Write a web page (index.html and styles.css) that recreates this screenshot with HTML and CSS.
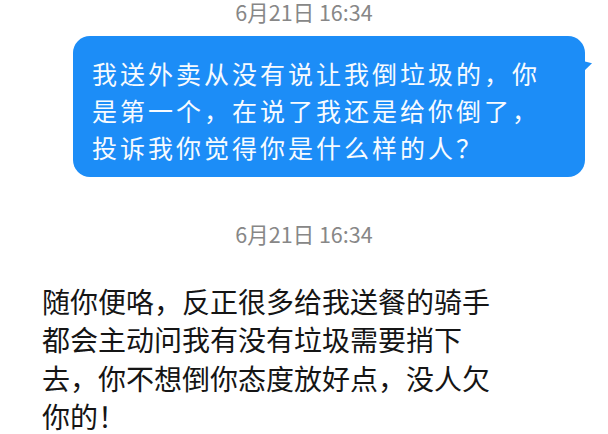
FILE: index.html
```html
<!DOCTYPE html>
<html lang="zh-CN">
<head>
<meta charset="utf-8">
<link rel="stylesheet" href="styles.css">
</head>
<body>
<div class="chat">
  <div class="time time-first">6月21日 16:34</div>
  <div class="row-out">
    <div class="bubble">我送外卖从没有说让我倒垃圾的，你<br>是第一个，在说了我还是给你倒了，<br>投诉我你觉得你是什么样的人？</div>
  </div>
  <div class="time time-second">6月21日 16:34</div>
  <div class="msg-in">随你便咯，反正很多给我送餐的骑手<br>都会主动问我有没有垃圾需要捎下<br>去，你不想倒你态度放好点，没人欠<br>你的！</div>
</div>
</body>
</html>
```

FILE: styles.css
```css
html, body {
  margin: 0;
  padding: 0;
  background: #ffffff;
}

body {
  font-family: "Noto Sans CJK SC", "Noto Sans", sans-serif;
  width: 608px;
  height: 434px;
  overflow: hidden;
}

.chat {
  display: flex;
  flex-direction: column;
}

.time {
  text-align: center;
  font-size: 21.5px;
  line-height: 24px;
  color: #878787;
}

.time-first {
  margin-top: 0;
}

.row-out {
  display: flex;
  justify-content: flex-end;
  padding-right: 23px;
  margin-top: 12px;
}

.bubble {
  position: relative;
  width: 512px;
  box-sizing: border-box;
  padding: 19px 10px 11px 19px;
  background: #1c8df7;
  color: #f7fbff;
  border-radius: 17px;
  font-size: 25px;
  line-height: 37px;
  letter-spacing: 3px;
  white-space: nowrap;
}

.bubble::after {
  content: "";
  position: absolute;
  right: -7px;
  top: 25px;
  width: 9px;
  height: 11px;
  background: #1c8df7;
  clip-path: polygon(0 0, 100% 20%, 0 100%);
}

.time-second {
  margin-top: 45px;
}

.msg-in {
  margin-top: 36px;
  padding-left: 42px;
  font-size: 28px;
  line-height: 38.3px;
  color: #151515;
  white-space: nowrap;
}
```
